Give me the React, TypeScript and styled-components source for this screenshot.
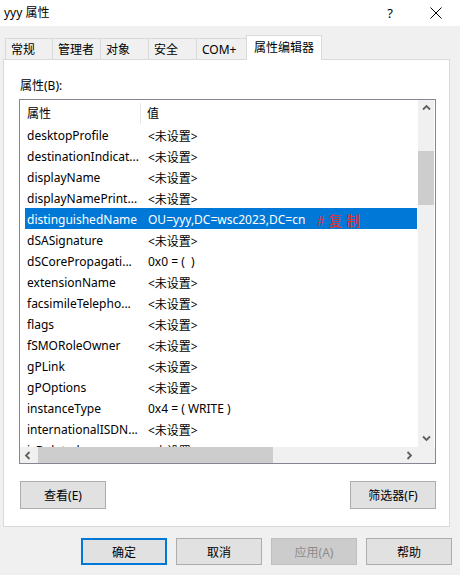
import React from 'react';
import styled, { createGlobalStyle } from 'styled-components';

const Global = createGlobalStyle`
  html, body { margin: 0; padding: 0; background: #f0f0f0; }
  body {
    font-family: "Segoe UI", "Noto Sans", "Noto Sans CJK SC", sans-serif;
    font-size: 12px;
    color: #000;
  }
  * { box-sizing: border-box; }
`;

const Window = styled.div`
  width: 460px;
  height: 575px;
  display: flex;
  flex-direction: column;
  background: #f0f0f0;
  overflow: hidden;
`;

const TitleBar = styled.div`
  height: 26px;
  flex: none;
  background: #fff;
  display: flex;
  align-items: center;
  padding-left: 4px;
  padding-right: 1px;
`;

const Title = styled.div`
  flex: 1;
  font-size: 12px;
  line-height: 16px;
`;

const TitleButton = styled.div`
  width: 46px;
  height: 26px;
  display: flex;
  align-items: center;
  justify-content: center;
  font-size: 13px;
  color: #000;
`;

const TabArea = styled.div`
  flex: none;
  padding: 9px 0 0 5px;
  position: relative;
  z-index: 1;
  margin-bottom: -1px;
`;

const TabStrip = styled.div`
  display: flex;
  align-items: flex-end;
  height: 25px;
`;

const Tab = styled.div<{ $w: number; $active?: boolean }>`
  width: ${p => p.$w}px;
  height: ${p => (p.$active ? 25 : 21)}px;
  margin-bottom: ${p => (p.$active ? 0 : 1)}px;
  background: ${p => (p.$active ? '#fff' : '#f0f0f0')};
  border: 1px solid #d9d9d9;
  border-bottom: none;
  border-right: ${p => (p.$active ? '1px solid #d9d9d9' : 'none')};
  display: flex;
  align-items: center;
  padding-left: ${p => (p.$active ? 7 : 5)}px;
  padding-bottom: ${p => (p.$active ? 2 : 0)}px;
  font-size: 12px;
  white-space: nowrap;
`;

const Panel = styled.div`
  flex: none;
  margin-left: 3px;
  width: 447px;
  height: 468px;
  background: #fff;
  border: 1px solid #d9d9d9;
  padding: 17px 0 0 15px;
  display: flex;
  flex-direction: column;
`;

const Label = styled.div`
  margin-left: 1px;
  line-height: 16px;
  height: 16px;
  padding-top: 1px;
  margin-bottom: 6px;
`;

const ListBox = styled.div`
  width: 417px;
  height: 365px;
  border: 1px solid #828790;
  background: #fff;
  display: grid;
  grid-template-columns: 1fr 17px;
  grid-template-rows: 1fr 16px;
`;

const ListContent = styled.div`
  overflow: hidden;
  display: flex;
  flex-direction: column;
  padding-left: 5px;
  padding-right: 1px;
`;

const HeaderRow = styled.div`
  flex: none;
  height: 24px;
  display: flex;
  align-items: center;
`;

const HeaderCell = styled.div<{ $w?: number; $divider?: boolean }>`
  ${p => (p.$w ? `width: ${p.$w}px; flex: none;` : 'flex: 1;')}
  height: 21px;
  margin-top: 3px;
  display: flex;
  align-items: center;
  padding-left: ${p => (p.$divider ? 2 : 6)}px;
  padding-bottom: 2px;
  border-right: ${p => (p.$divider ? '1px solid #e5e5e5' : 'none')};
  white-space: nowrap;
`;

const Row = styled.div<{ $selected?: boolean }>`
  flex: none;
  height: 21px;
  padding-top: 2px;
  display: flex;
  align-items: center;
  background: ${p => (p.$selected ? '#0078d7' : 'transparent')};
  color: ${p => (p.$selected ? '#fff' : '#000')};
  white-space: nowrap;
`;

const NameCell = styled.div`
  width: 116px;
  flex: none;
  padding-left: 2px;
  overflow: hidden;
`;

const ValueCell = styled.div`
  flex: 1;
  padding-left: 7px;
  overflow: hidden;
  display: flex;
  align-items: center;
  white-space: pre;
`;

const Note = styled.span`
  margin-left: 12px;
  color: #e5322d;
  font-family: "Liberation Serif", "Noto Sans CJK SC", serif;
  font-size: 14px;
  letter-spacing: 4px;
`;

const VScroll = styled.div`
  background: #f0f0f0;
  display: flex;
  flex-direction: column;
  border-right: 1px solid #fff;
`;

const HScroll = styled.div`
  background: #f0f0f0;
  display: flex;
`;

const Corner = styled.div`
  background: #f0f0f0;
`;

const ArrowBtn = styled.div<{ $h?: boolean }>`
  flex: none;
  width: ${p => (p.$h ? '17px' : '100%')};
  height: ${p => (p.$h ? '100%' : '17px')};
  display: flex;
  align-items: center;
  justify-content: center;
`;

const VTrack = styled.div`
  flex: 1;
  padding-top: 34px;
`;

const VThumb = styled.div`
  height: 54px;
  background: #cdcdcd;
`;

const HTrack = styled.div`
  flex: 1;
  padding-left: 1px;
  display: flex;
`;

const HThumb = styled.div`
  width: 235px;
  height: 100%;
  background: #cdcdcd;
`;

const PanelButtons = styled.div`
  margin-top: 17px;
  width: 417px;
  padding-left: 1px;
  display: flex;
  justify-content: space-between;
`;

const Button = styled.div<{ $default?: boolean; $disabled?: boolean; $h?: number }>`
  width: 86px;
  height: ${p => p.$h ?? 28}px;
  display: flex;
  align-items: center;
  justify-content: center;
  background: ${p => (p.$disabled ? '#cccccc' : '#e1e1e1')};
  border: ${p =>
    p.$default ? '2px solid #0078d7' : p.$disabled ? '1px solid #bfbfbf' : '1px solid #adadad'};
  color: ${p => (p.$disabled ? '#8d8d8d' : '#000')};
  font-size: 12px;
  white-space: nowrap;
`;

const DialogButtons = styled.div`
  margin-top: 11px;
  padding-left: 81px;
  display: flex;
  gap: 9px;
`;

const Chevron = ({ dir }: { dir: 'up' | 'down' | 'left' | 'right' }) => {
  const pts: Record<string, string> = {
    up: '1,5.5 4.5,2 8,5.5',
    down: '1,2.5 4.5,6 8,2.5',
    left: '5.5,1 2,4.5 5.5,8',
    right: '2.5,1 6,4.5 2.5,8',
  };
  return (
    <svg width="9" height="9" viewBox="0 0 9 9">
      <polyline points={pts[dir]} fill="none" stroke="#606060" strokeWidth="1.8" />
    </svg>
  );
};

const rows: { name: string; value: string; selected?: boolean }[] = [
  { name: 'desktopProfile', value: '<未设置>' },
  { name: 'destinationIndicat...', value: '<未设置>' },
  { name: 'displayName', value: '<未设置>' },
  { name: 'displayNamePrint...', value: '<未设置>' },
  { name: 'distinguishedName', value: 'OU=yyy,DC=wsc2023,DC=cn', selected: true },
  { name: 'dSASignature', value: '<未设置>' },
  { name: 'dSCorePropagati...', value: '0x0 = (  )' },
  { name: 'extensionName', value: '<未设置>' },
  { name: 'facsimileTelepho...', value: '<未设置>' },
  { name: 'flags', value: '<未设置>' },
  { name: 'fSMORoleOwner', value: '<未设置>' },
  { name: 'gPLink', value: '<未设置>' },
  { name: 'gPOptions', value: '<未设置>' },
  { name: 'instanceType', value: '0x4 = ( WRITE )' },
  { name: 'internationalISDN...', value: '<未设置>' },
  { name: 'isDeleted', value: '<未设置>' },
];

const tabs = [
  { label: '常规', w: 47 },
  { label: '管理者', w: 48 },
  { label: '对象', w: 48 },
  { label: '安全', w: 48 },
  { label: 'COM+', w: 50 },
];

export default function App() {
  return (
    <Window>
      <Global />
      <TitleBar>
        <Title>yyy 属性</Title>
        <TitleButton>?</TitleButton>
        <TitleButton>
          <svg width="12" height="12" viewBox="0 0 12 12">
            <path d="M0.5 0.5 L11.5 11.5 M11.5 0.5 L0.5 11.5" stroke="#000" strokeWidth="1" />
          </svg>
        </TitleButton>
      </TitleBar>
      <TabArea>
        <TabStrip>
          {tabs.map(t => (
            <Tab key={t.label} $w={t.w}>
              {t.label}
            </Tab>
          ))}
          <Tab $w={76} $active>
            属性编辑器
          </Tab>
        </TabStrip>
      </TabArea>
      <Panel>
        <Label>属性(B):</Label>
        <ListBox>
          <ListContent>
            <HeaderRow>
              <HeaderCell $w={116} $divider>
                属性
              </HeaderCell>
              <HeaderCell>值</HeaderCell>
            </HeaderRow>
            {rows.map(r => (
              <Row key={r.name} $selected={r.selected}>
                <NameCell>{r.name}</NameCell>
                <ValueCell>
                  {r.value}
                  {r.selected && <Note>#复制</Note>}
                </ValueCell>
              </Row>
            ))}
          </ListContent>
          <VScroll>
            <ArrowBtn>
              <Chevron dir="up" />
            </ArrowBtn>
            <VTrack>
              <VThumb />
            </VTrack>
            <ArrowBtn>
              <Chevron dir="down" />
            </ArrowBtn>
          </VScroll>
          <HScroll>
            <ArrowBtn $h>
              <Chevron dir="left" />
            </ArrowBtn>
            <HTrack>
              <HThumb />
            </HTrack>
            <ArrowBtn $h>
              <Chevron dir="right" />
            </ArrowBtn>
          </HScroll>
          <Corner />
        </ListBox>
        <PanelButtons>
          <Button>查看(E)</Button>
          <Button>筛选器(F)</Button>
        </PanelButtons>
      </Panel>
      <DialogButtons>
        <Button $default $h={27}>确定</Button>
        <Button $h={27}>取消</Button>
        <Button $disabled $h={27}>应用(A)</Button>
        <Button $h={27}>帮助</Button>
      </DialogButtons>
    </Window>
  );
}
